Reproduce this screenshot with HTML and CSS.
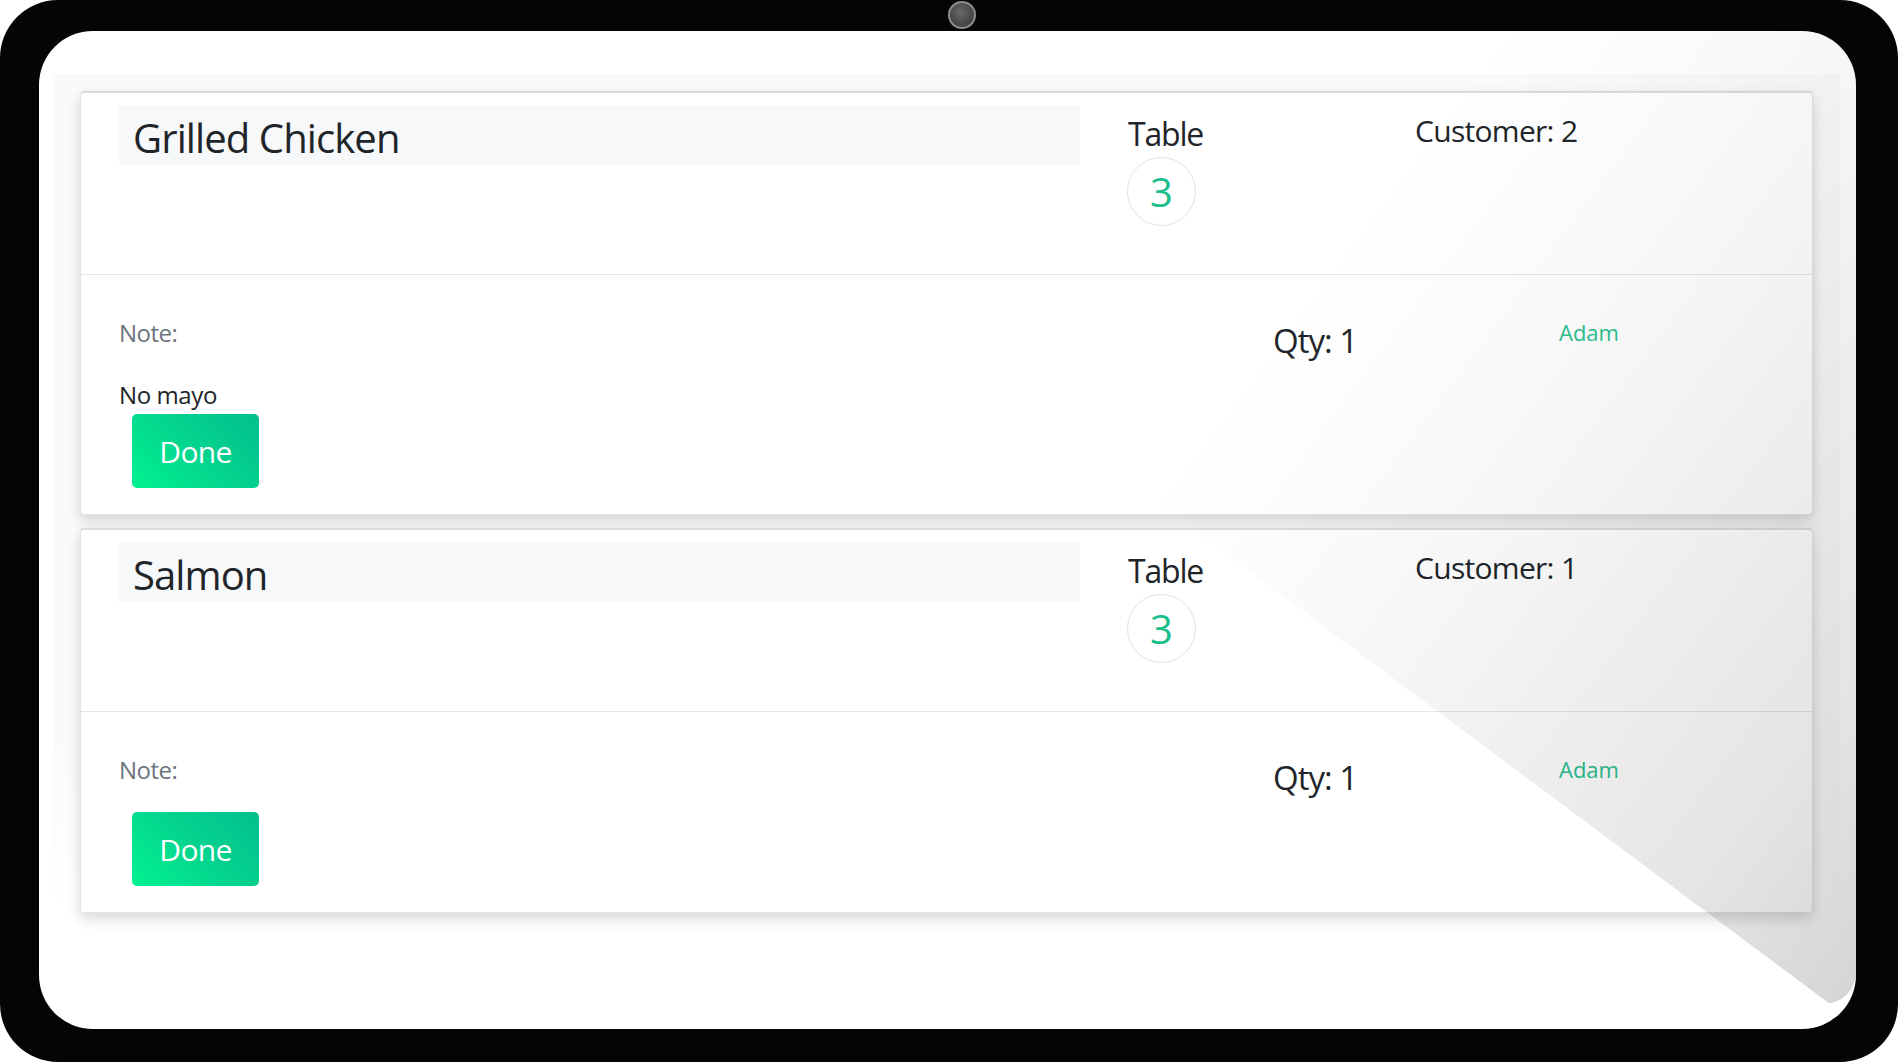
FILE: index.html
```html
<!DOCTYPE html>
<html lang="en">
<head>
<meta charset="utf-8">
<title>Kitchen orders</title>
<link rel="stylesheet" href="styles.css">
</head>
<body>
<div class="device">
  <span class="camera"></span>
  <div class="screen">
    <section class="orders">
      <article class="card">
        <header class="card-head">
          <div class="col-title"><h2 class="dish">Grilled Chicken</h2></div>
          <div class="col-table">
            <div class="table-label">Table</div>
            <div class="table-num">3</div>
          </div>
          <div class="col-customer">Customer: 2</div>
        </header>
        <div class="card-body">
          <div class="col-note">
            <p class="note-label">Note:</p>
            <p class="note-text">No mayo</p>
            <button class="btn-done" type="button">Done</button>
          </div>
          <div class="col-qty">Qty: 1</div>
          <div class="col-server">Adam</div>
        </div>
      </article>
      <article class="card">
        <header class="card-head">
          <div class="col-title"><h2 class="dish">Salmon</h2></div>
          <div class="col-table">
            <div class="table-label">Table</div>
            <div class="table-num">3</div>
          </div>
          <div class="col-customer">Customer: 1</div>
        </header>
        <div class="card-body">
          <div class="col-note">
            <p class="note-label">Note:</p>
            <p class="note-text"></p>
            <button class="btn-done" type="button">Done</button>
          </div>
          <div class="col-qty">Qty: 1</div>
          <div class="col-server">Adam</div>
        </div>
      </article>
    </section>
    <div class="glare"></div>
  </div>
</div>
</body>
</html>
```

FILE: styles.css
```css
html, body {
  margin: 0;
  padding: 0;
  background: #ffffff;
}

body {
  font-family: "Open Sans", "Noto Sans", sans-serif;
  color: #212529;
}

.device {
  position: relative;
  box-sizing: border-box;
  height: 1062px;
  width: 1898px;
  padding: 31px 42px 33px 39px;
  background: #050505;
  border-radius: 58px;
}

.camera {
  position: absolute;
  left: 948px;
  top: 1px;
  width: 24px;
  height: 24px;
  border-radius: 50%;
  background: radial-gradient(circle at 45% 40%, #6a6a6a 0%, #4a4a4a 55%, #3a3a3a 100%);
  border: 2px solid #8c8c8c;
}

.screen {
  position: relative;
  box-sizing: border-box;
  height: 100%;
  padding: 43px 16px 0 14px;
  background: #ffffff;
  border-radius: 54px;
  overflow: hidden;
}

.orders {
  display: flex;
  flex-direction: column;
  gap: 13px;
  padding: 17px 27px 0;
  background: linear-gradient(to bottom, #fafafa 0%, #fafafa 80%, rgba(250, 250, 250, 0) 100%);
}

.card {
  background: #ffffff;
  border: 1px solid #e4e4e4;
  border-top: 2px solid #dcdcdc;
  border-radius: 4px;
  box-shadow: 0 7px 14px rgba(0, 0, 0, 0.13), 0 0 10px rgba(0, 0, 0, 0.04);
}

.card-head {
  box-sizing: border-box;
  height: 182px;
  display: grid;
  grid-template-columns: 1009px 287px 1fr;
  align-items: start;
  padding: 13px 0 0 38px;
  border-bottom: 1px solid #e6e6e6;
}

.dish {
  box-sizing: border-box;
  height: 59px;
  margin: 0 48px 0 0;
  padding: 4px 14px 0;
  background: #f7f8f9;
  font-size: 40px;
  font-weight: 400;
  line-height: 55px;
  letter-spacing: -0.9px;
  color: #212529;
}

.col-table {
  padding-top: 6px;
}

.table-label {
  font-size: 32px;
  letter-spacing: -1.2px;
}

.table-num {
  box-sizing: border-box;
  width: 69px;
  height: 69px;
  margin: 2px 0 0 -1px;
  border: 1px solid #e2e2e2;
  border-radius: 50%;
  display: flex;
  align-items: center;
  justify-content: center;
  font-size: 40px;
  line-height: 1;
  color: #1cbf8c;
}

.col-customer {
  padding-top: 4px;
  font-size: 30px;
  letter-spacing: -0.7px;
}

.card-body {
  display: grid;
  grid-template-columns: 1154px 286px 1fr;
  align-items: start;
  padding: 41px 0 26px 38px;
}

.col-note {
  display: flex;
  flex-direction: column;
  align-items: flex-start;
}

.note-label {
  margin: 0 0 26px;
  font-size: 24px;
  letter-spacing: -0.5px;
  color: #6c757d;
}

.note-text {
  margin: 0;
  font-size: 24px;
  line-height: 39px;
  letter-spacing: -0.4px;
  color: #212529;
}

.note-text:empty {
  height: 0;
}

.btn-done {
  box-sizing: border-box;
  width: 127px;
  height: 74px;
  margin: 0 0 0 13px;
  padding: 0;
  border: none;
  border-radius: 5px;
  background: linear-gradient(45deg, #02f291 0%, #04d58e 50%, #02bf8e 100%);
  font-family: "Open Sans", "Noto Sans", sans-serif;
  font-size: 30px;
  letter-spacing: -0.7px;
  color: #ffffff;
}

.col-qty {
  padding-top: 2px;
  font-size: 33px;
  letter-spacing: -1px;
  color: #212529;
}

.col-server {
  padding-top: 1px;
  font-size: 22px;
  color: #2bbf8f;
}

.glare {
  position: absolute;
  left: 0;
  top: 0;
  width: 1817px;
  height: 973px;
  border-bottom-right-radius: 32px;
  pointer-events: none;
  clip-path: polygon(486px 0, 100% 0, 100% 100%, 1791px 973px);
  background: linear-gradient(126.7deg,
    rgba(0, 0, 0, 0) 57%,
    rgba(0, 0, 0, 0.012) 63%,
    rgba(0, 0, 0, 0.035) 72%,
    rgba(0, 0, 0, 0.105) 91%,
    rgba(0, 0, 0, 0.17) 100%);
}
```
